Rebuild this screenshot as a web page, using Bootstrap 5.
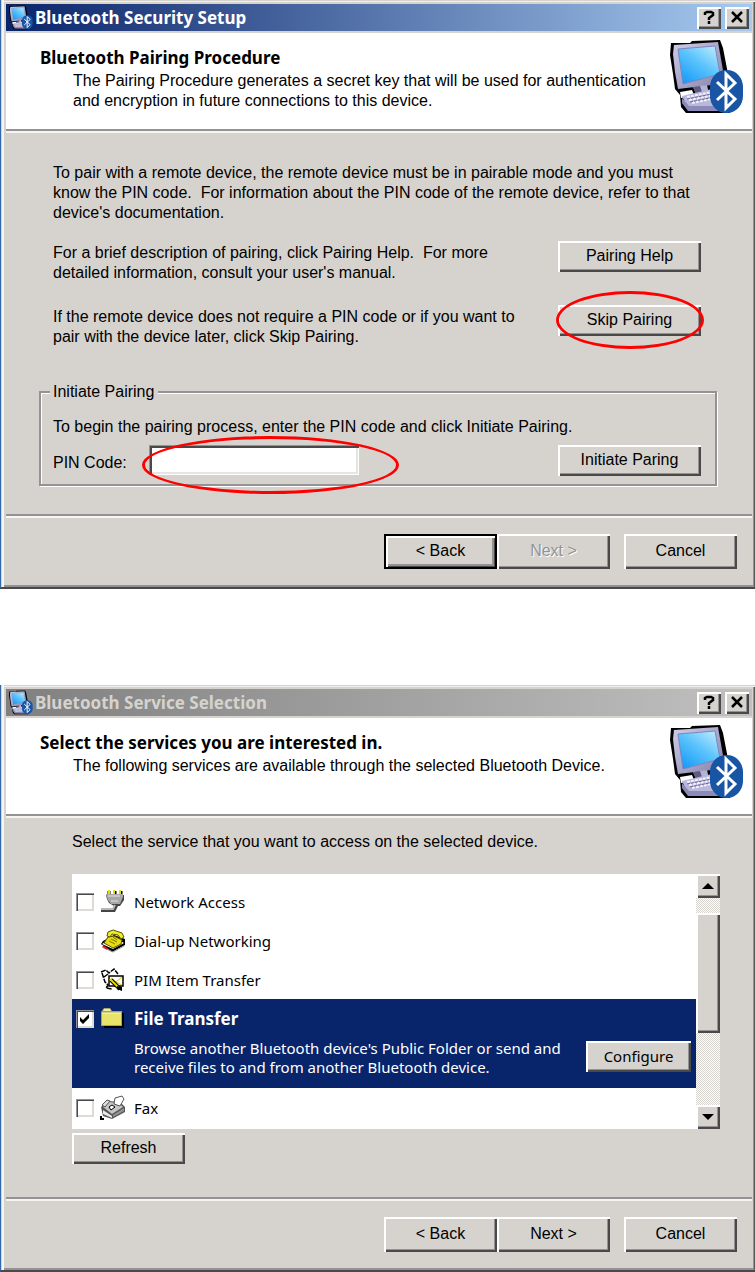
<!DOCTYPE html>
<html lang="en">
<head>
<meta charset="utf-8">
<meta name="viewport" content="width=device-width, initial-scale=1">
<title>Bluetooth Setup</title>
<link rel="stylesheet" href="https://cdn.jsdelivr.net/npm/bootstrap@5.3.0/dist/css/bootstrap.min.css">
<script src="https://cdn.jsdelivr.net/npm/bootstrap@5.3.0/dist/js/bootstrap.bundle.min.js"></script>
<style>
  :root { --face: #d6d3ce; --hi: #fff; --shade: #949294; --dark: #4a494a; --navy: #08246b; }
  body { font: 16px/20px "Liberation Sans", Arial, sans-serif; color: #000; background: #fff; }

  /* Windows */
  .dlg { background: var(--face); border-left: 1px solid #316aad; border-bottom: 2px solid var(--dark);
         padding: 4px 3px 0 5px;
         box-shadow: inset 1px 0 var(--face), inset 3px 0 #f7f5f3, inset 0 1px #d6d3ce, inset 0 2px #f2f0ed, inset -1px 0 #5a595a, inset -2px 0 var(--shade), inset 0 -2px #949294; }
  .dlg + .dlg { margin-top: 96px; }
  .caption { height: 27px; padding: 0 3px; background: linear-gradient(90deg, #0a246a, #a6caf0); color: #fff; }
  .caption.inactive { background: linear-gradient(90deg, #808080, #c0c0c0); color: #d6d3ce; }
  .caption h1 { font: 700 17px/26px "Noto Sans", sans-serif; padding-left: 2px; }
  .cap-icon { width: 24px; height: 25px; }
  .banner { background: #fff; height: 96px; margin-top: 2px; padding: 15px 8px 0 34px; }
  .banner h2 { font: 700 17px/20px "Noto Sans", sans-serif; margin: 0 0 3px; }
  .banner p { padding-left: 33px; }
  .banner-icon { width: 74px; height: 74px; margin-top: -8px; }
  .etched { height: 4px; border-top: 2px solid #949294; border-bottom: 2px solid #f7f5f3; }

  /* Raised controls */
  .btn3d { border: 0; border-radius: 0; background: var(--face); color: #000; padding: 0 0 1px; font: inherit; line-height: 20px;
           width: 113px; height: 35px;
           box-shadow: inset 2px 2px var(--hi), inset -2px -2px var(--dark), inset -3px -3px var(--shade); }
  .btn3d:hover { background: var(--face); }
  .btn3d.is-default { box-shadow: inset 0 0 0 2px #000, inset 4px 4px var(--hi), inset -3px -3px var(--dark), inset -5px -5px var(--shade); }
  .btn3d:disabled { color: #949294; opacity: 1; text-shadow: 1px 1px #fff; border: 0; background: var(--face); }
  .btn-action { width: 143px; height: 31px; }
  .btn-refresh { height: 31px; }
  .btn-cap { width: 24px; height: 22px; }
  .btn-config { width: 105px; height: 31px; font: 15px/20px "Noto Sans", sans-serif; }
  .foot { padding: 16px 15px 18px; gap: 14px; }

  /* Pairing page */
  .pairing { padding: 30px 35px 28px 33px; }
  .pair-text { padding: 0 14px; }
  .pair-row { padding: 0 16px 0 14px; margin-top: 18px; }
  .pair-row p { padding-top: 2px; }
  .pair-group { border: 2px solid #949294; box-shadow: inset 1px 1px var(--hi), 1px 1px var(--hi); height: 95px; padding: 24px 14px 0 12px; margin-top: 44px; position: relative; }
  .pair-group legend { position: absolute; left: 9px; top: -11px; width: auto; padding: 0 4px 0 3px; margin: 0; float: none; background: var(--face); font: inherit; }
  .pin { width: 210px; height: 30px; border: 0; border-radius: 0; padding: 2px 6px; background: #fff;
         box-shadow: inset 1px 1px var(--shade), inset 3px 3px var(--dark), inset -1px -1px #fff, inset -3px -3px #e7e5e2; }
  .pin-label { width: 96px; }
  .marker { position: absolute; border: 3px solid #f00; border-radius: 50%; pointer-events: none; }
  .marker-skip { inset: -14px -3px -13px -2px; }
  .marker-pin { inset: -9px -40px -19px -7px; }

  /* Service page */
  .services { padding: 14px 32px 33px 66px; }
  .svc-list { background: #fff; font: 15px/20px "Noto Sans", sans-serif; padding-top: 8px; height: 255px; margin-top: 22px; }
  .svc { min-height: 39px; padding: 0 5px 0 4px; }
  .svc-head { min-height: 39px; gap: 6px; }
  .svc.chosen { background: var(--navy); color: #fff; height: 89px; }
  .svc.chosen label { font-weight: 700; font-size: 17px; }
  .svc.chosen p { padding-left: 58px; line-height: 19px; margin-top: 1px; }
  .svc.chosen .btn-config { margin-top: 3px; }
  .svc-icon { width: 26px; height: 26px; flex: none; }
  .svc label { padding-left: 2px; }
  .tick { appearance: none; width: 18px; height: 18px; margin: 0; background: #fff center/14px no-repeat; flex: none;
          box-shadow: inset 1px 1px var(--shade), inset 2px 2px var(--dark), inset -2px -2px #dedbd6; }
  .tick:checked { background-image: url("data:image/svg+xml,%3Csvg xmlns='http://www.w3.org/2000/svg' viewBox='0 0 14 14'%3E%3Cpath d='M2 5l3 3 6-6v4l-6 6-3-3z'/%3E%3C/svg%3E"); }
  .sbar { width: 24px; height: 255px; margin-top: 22px; background: repeating-conic-gradient(#fff 0 25%, #d6d3ce 0 50%) 0 0/2px 2px; }
  .sbar-btn { width: 24px; height: 24px; }
  .sbar-thumb { height: 120px; margin-top: 15px; background: var(--face);
                box-shadow: inset 2px 2px var(--hi), inset -2px -2px var(--dark), inset -3px -3px var(--shade); }
</style>
</head>
<body>

<svg class="position-absolute" width="0" height="0" aria-hidden="true">
  <defs>
    <linearGradient id="screen" x1="1" y1="0" x2="0.2" y2="1"><stop offset="0" stop-color="#c8f0fc"/><stop offset=".5" stop-color="#5cc4fc"/><stop offset="1" stop-color="#189cf8"/></linearGradient>
    <linearGradient id="bezel" x1="0" y1="0" x2="1" y2="1"><stop offset="0" stop-color="#cfcde8"/><stop offset="1" stop-color="#8482ac"/></linearGradient>
    <symbol id="pc" viewBox="0 0 74 74">
      <path d="M1 3L20 3L22 1L50 0L53 8L58 34L60 73L16 73L11 67L10 55L5 49L3 34L0 15Z" fill="#000"/>
      <path d="M10 52L22 50L24 55L11 58Z" fill="#fff"/>
      <path d="M4 5L48 2L54 36L50 44L8 49L5 32L3 14Z" fill="url(#bezel)"/>
      <path d="M8 9L45 6L50 34L13 44Z" fill="url(#screen)" stroke="#7d86bd"/>
      <path d="M23 47L37 45L39 54L27 56Z" fill="#b4b2d4"/>
      <path d="M23 47L30 46L33 55L27 56Z" fill="#5d5c80"/>
      <path d="M12 56L42 49L56 64L50 70L18 69Z" fill="#b9b7db"/>
      <path d="M12 58L19 66L50 66V71L18 71L12 63Z" fill="#8c8ab8"/>
      <path d="M17 57L42 52M19 60L44 55M22 63L46 58" stroke="#f2f2fa" stroke-width="2" stroke-dasharray="3 1"/>
      <path d="M17 59L42 54M20 62L44 57" stroke="#6a6890" stroke-dasharray="3 1"/>
      <rect x="40" y="30" width="33" height="43" rx="16" ry="17" fill="#1855a5"/>
      <path d="M47 42L65 59L56 68V34L65 43L47 60" fill="none" stroke="#fff" stroke-width="3"/>
    </symbol>
    <symbol id="up" viewBox="0 0 24 24"><path d="M6 15h12l-6-6z"/></symbol>
    <symbol id="down" viewBox="0 0 24 24"><path d="M6 9h12l-6 6z"/></symbol>
  </defs>
</svg>

<section class="dlg" aria-labelledby="t1">
  <header class="caption d-flex align-items-center">
    <svg class="cap-icon"><use href="#pc"/></svg>
    <h1 id="t1" class="mb-0 flex-grow-1">Bluetooth Security Setup</h1>
    <button type="button" class="btn btn3d btn-cap" aria-label="Help"><svg class="d-block mx-auto" width="12" height="14" viewBox="0 0 12 14"><path d="M2 5V3L4 2H8L10 3V5L6 8V10M6 11V14" fill="none" stroke="#000" stroke-width="2.500"/></svg></button>
    <button type="button" class="btn btn3d btn-cap ms-1" aria-label="Close"><svg class="d-block mx-auto" width="14" height="12" viewBox="0 0 14 12"><path d="M2 1l10 10M12 1L2 11" stroke="#000" stroke-width="2.500"/></svg></button>
  </header>
  <div class="banner d-flex justify-content-between">
    <div>
      <h2>Bluetooth Pairing Procedure</h2>
      <p class="mb-0">The Pairing Procedure generates a secret key that will be used for authentication<br>and encryption in future connections to this device.</p>
    </div>
    <svg class="banner-icon flex-shrink-0"><use href="#pc"/></svg>
  </div>
  <div class="etched"></div>
  <div class="pairing">
    <p class="pair-text mb-0">To pair with a remote device, the remote device must be in pairable mode and you must<br>know the PIN code.&nbsp; For information about the PIN code of the remote device, refer to that<br>device's documentation.</p>
    <div class="pair-row d-flex justify-content-between align-items-start">
      <p class="mb-0">For a brief description of pairing, click Pairing Help.&nbsp; For more<br>detailed information, consult your user's manual.</p>
      <button type="button" class="btn btn3d btn-action">Pairing Help</button>
    </div>
    <div class="pair-row d-flex justify-content-between align-items-start pt-1">
      <p class="mb-0">If the remote device does not require a PIN code or if you want to<br>pair with the device later, click Skip Pairing.</p>
      <div class="position-relative d-flex">
        <button type="button" class="btn btn3d btn-action">Skip Pairing</button>
        <span class="marker marker-skip"></span>
      </div>
    </div>
    <fieldset class="pair-group">
      <legend>Initiate Pairing</legend>
      <p class="mb-2">To begin the pairing process, enter the PIN code and click Initiate Pairing.</p>
      <div class="d-flex align-items-start">
        <label class="pin-label pt-2" for="pin">PIN Code:</label>
        <div class="position-relative d-flex">
          <input id="pin" class="pin" type="text">
          <span class="marker marker-pin"></span>
        </div>
        <button type="button" class="btn btn3d btn-action ms-auto">Initiate Paring</button>
      </div>
    </fieldset>
  </div>
  <div class="etched"></div>
  <footer class="foot d-flex justify-content-end">
    <div class="d-flex">
      <button type="button" class="btn btn3d is-default">&lt; Back</button>
      <button type="button" class="btn btn3d" disabled>Next &gt;</button>
    </div>
    <button type="button" class="btn btn3d">Cancel</button>
  </footer>
</section>

<section class="dlg" aria-labelledby="t2">
  <header class="caption inactive d-flex align-items-center">
    <svg class="cap-icon"><use href="#pc"/></svg>
    <h1 id="t2" class="mb-0 flex-grow-1">Bluetooth Service Selection</h1>
    <button type="button" class="btn btn3d btn-cap" aria-label="Help"><svg class="d-block mx-auto" width="12" height="14" viewBox="0 0 12 14"><path d="M2 5V3L4 2H8L10 3V5L6 8V10M6 11V14" fill="none" stroke="#000" stroke-width="2.500"/></svg></button>
    <button type="button" class="btn btn3d btn-cap ms-1" aria-label="Close"><svg class="d-block mx-auto" width="14" height="12" viewBox="0 0 14 12"><path d="M2 1l10 10M12 1L2 11" stroke="#000" stroke-width="2.500"/></svg></button>
  </header>
  <div class="banner d-flex justify-content-between">
    <div>
      <h2>Select the services you are interested in.</h2>
      <p class="mb-0">The following services are available through the selected Bluetooth Device.</p>
    </div>
    <svg class="banner-icon flex-shrink-0"><use href="#pc"/></svg>
  </div>
  <div class="etched"></div>
  <div class="services">
    <p class="mb-0">Select the service that you want to access on the selected device.</p>
    <div class="d-flex">
      <div class="svc-list flex-grow-1">
        <div class="svc svc-head d-flex align-items-center">
          <input class="tick" type="checkbox" id="s1">
          <svg class="svc-icon" viewBox="0 0 26 26">
            <path d="M9 2v4M15 2v4M21 2v4" stroke="#000" stroke-width="3"/><path d="M9 1v5M14 1v5M20 1v5" stroke="#e8e000" stroke-width="2"/>
            <path d="M6 6H24V11L20 17H18L15 23H1V20H12L14 17L9 14L7 10Z" fill="#444"/>
            <path d="M6 5H23V8L20 15H11L8 11Z" fill="#a8a6a8"/><path d="M8 7h12M11 12h7" stroke="#e4e4e4" stroke-width="1"/>
            <path d="M15 16L13 20H1" fill="none" stroke="#b8b8b8" stroke-width="2"/>
          </svg>
          <label for="s1">Network Access</label>
        </div>
        <div class="svc svc-head d-flex align-items-center">
          <input class="tick" type="checkbox" id="s2">
          <svg class="svc-icon" viewBox="0 0 26 26">
            <path d="M1 16L12 24L25 17V11L14 7L3 13Z" fill="#000"/>
            <path d="M2 16L13 21L24 15L14 9Z" fill="#fff"/><path d="M2 19L13 24L24 18" fill="none" stroke="#999" stroke-width="1"/>
            <path d="M4 15L8 9L14 8L22 12L21 16L13 20Z" fill="#e6dc10" stroke="#555200"/>
            <path d="M7 8L8 4L13 2L22 5L24 9L21 11L18 7L12 6L10 9Z" fill="#f4ec20" stroke="#555200"/>
            <path d="M9 13l6 3M11 11l6 3M13 9l4 3" stroke="#7c7400"/><path d="M3 18l4 3" stroke="#e02020" stroke-width="2"/>
          </svg>
          <label for="s2">Dial-up Networking</label>
        </div>
        <div class="svc svc-head d-flex align-items-center">
          <input class="tick" type="checkbox" id="s3">
          <svg class="svc-icon" viewBox="0 0 26 26">
            <path d="M1 5L6 3L9 6L14 2L18 7M2 6L5 15L8 18L6 21L12 22M4 10L8 7" fill="none" stroke="#000" stroke-width="1.500" stroke-dasharray="5 1"/>
            <path d="M9 9H23V19H9Z" fill="#fff" stroke="#000" stroke-width="1.500"/>
            <path d="M11 11L16 15L22 10M16 15L22 18" fill="none" stroke="#d6c600" stroke-width="1"/>
            <path d="M11 13L20 22" stroke="#000" stroke-width="4"/><path d="M10 12L19 21" stroke="#e8d800" stroke-width="2"/>
            <path d="M17 19L22 20V24L17 22Z" fill="#000"/>
          </svg>
          <label for="s3">PIM Item Transfer</label>
        </div>
        <div class="svc chosen">
          <div class="svc-head d-flex align-items-center">
            <input class="tick" type="checkbox" id="s4" checked>
            <svg class="svc-icon" viewBox="0 0 26 26">
              <path d="M4 21H23V7" fill="none" stroke="#000" stroke-width="2"/>
              <path d="M1 6L4 2H10L12 5H22V20H1Z" fill="#a5a263"/>
              <path d="M2 7H21V19H2Z" fill="#e7e36b"/><path d="M4 3h6l1 2H3z" fill="#efeba5"/><path d="M2 7H21" stroke="#fffbc0"/>
            </svg>
            <label for="s4">File Transfer</label>
          </div>
          <div class="d-flex justify-content-between align-items-start">
            <p class="mb-0">Browse another Bluetooth device's Public Folder or send and<br>receive files to and from another Bluetooth device.</p>
            <button type="button" class="btn btn3d btn-config flex-shrink-0">Configure</button>
          </div>
        </div>
        <div class="svc svc-head d-flex align-items-center">
          <input class="tick" type="checkbox" id="s5">
          <svg class="svc-icon" viewBox="0 0 26 26">
            <path d="M1 12L8 6L20 7L25 12V17L12 24L3 21Z" fill="#555"/>
            <path d="M3 12L9 7L19 8L23 12L12 19Z" fill="#c4c2c4"/><path d="M3 15L12 21V23L3 19Z" fill="#e8e8e8"/><path d="M13 20L24 13V16L13 22Z" fill="#949294"/>
            <path d="M15 3L22 1L24 4L20 11L14 9Z" fill="#fff" stroke="#555"/>
            <path d="M9 12L12 10L15 12L11 15Z" fill="#fff" stroke="#000"/><path d="M2 10L7 5L10 6L5 12Z" fill="#ddd" stroke="#555"/><path d="M1 21v3h3" fill="none" stroke="#000" stroke-width="2"/>
          </svg>
          <label for="s5">Fax</label>
        </div>
      </div>
      <div class="sbar d-flex flex-column flex-shrink-0">
        <button type="button" class="btn btn3d sbar-btn" aria-label="Scroll up"><svg class="d-block" width="24" height="24"><use href="#up"/></svg></button>
        <div class="sbar-thumb"></div>
        <button type="button" class="btn btn3d sbar-btn mt-auto" aria-label="Scroll down"><svg class="d-block" width="24" height="24"><use href="#down"/></svg></button>
      </div>
    </div>
    <button type="button" class="btn btn3d btn-refresh d-block mt-1">Refresh</button>
  </div>
  <div class="etched"></div>
  <footer class="foot d-flex justify-content-end">
    <div class="d-flex">
      <button type="button" class="btn btn3d">&lt; Back</button>
      <button type="button" class="btn btn3d">Next &gt;</button>
    </div>
    <button type="button" class="btn btn3d">Cancel</button>
  </footer>
</section>

</body>
</html>
